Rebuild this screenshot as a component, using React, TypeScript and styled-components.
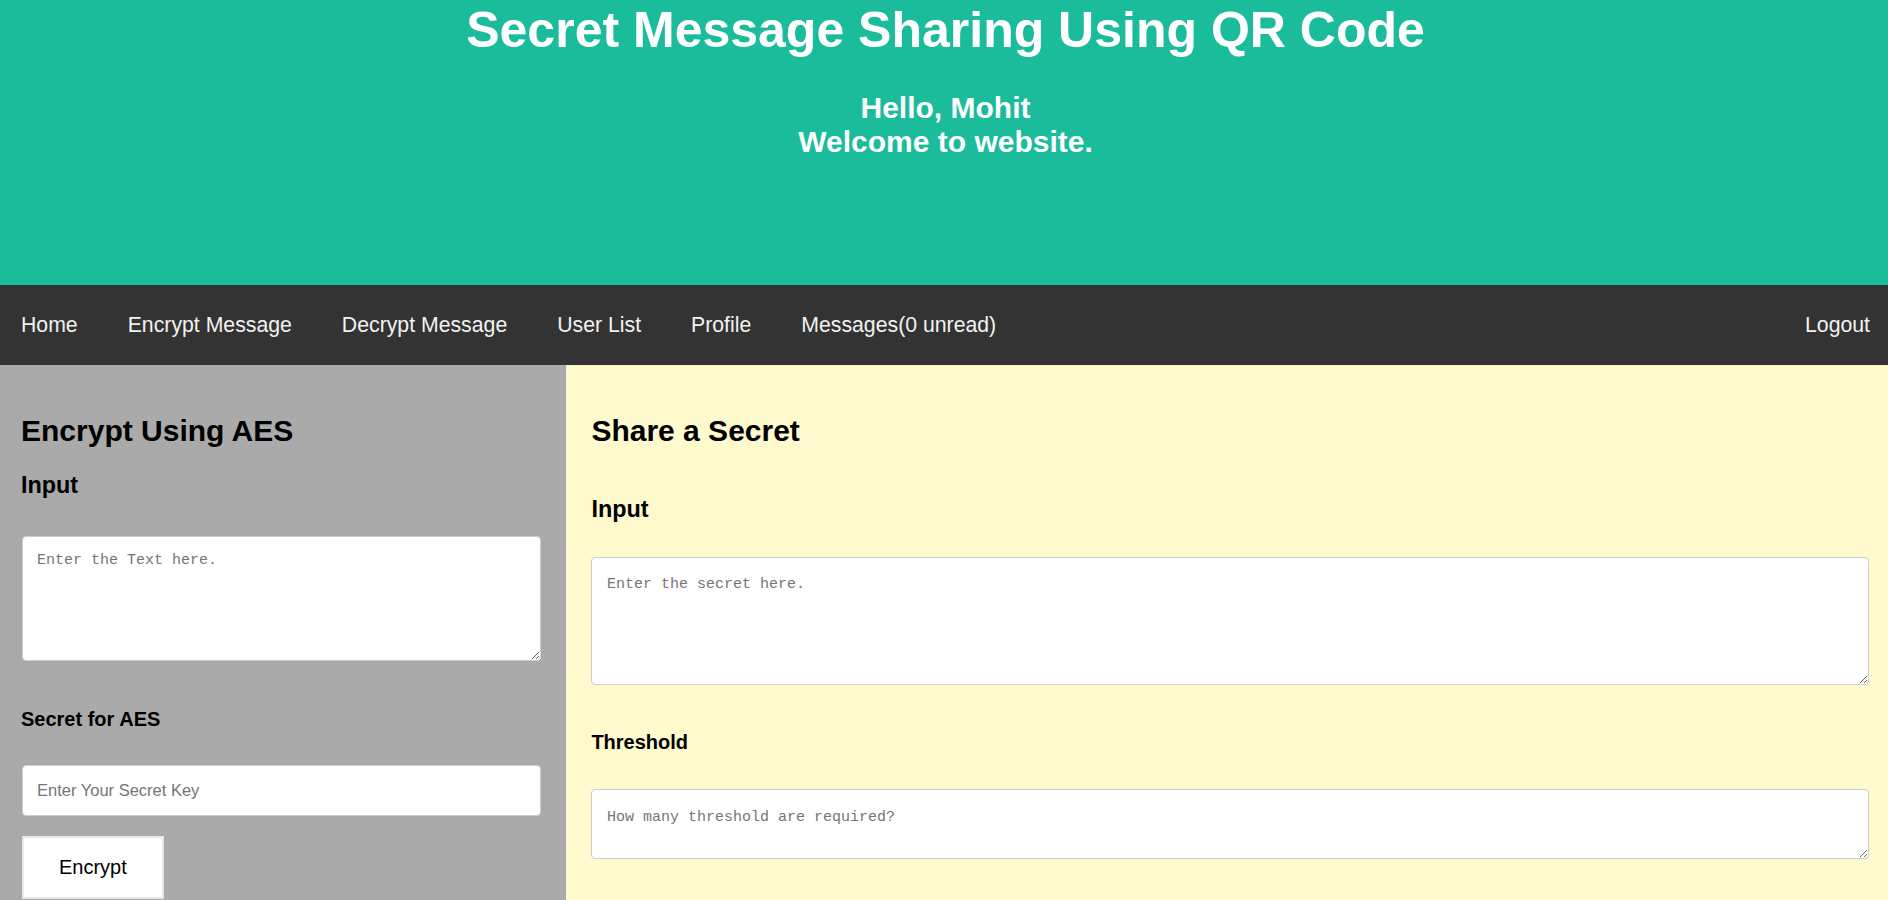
import React from 'react'
import styled, { createGlobalStyle } from 'styled-components'

const GlobalStyle = createGlobalStyle`
    html, body {
        margin: 0;
        padding: 0;
        font-family: "Liberation Sans", Arial, sans-serif;
    }
    * {
        box-sizing: border-box;
    }
`

const Header = styled.header`
    background: #1abc9c;
    color: #ffffff;
    text-align: center;
    height: 285px;
    padding-top: 1px;
`

const Title = styled.h1`
    margin: 0;
    padding-left: 3px;
    font-size: 50px;
    font-weight: bold;
    line-height: normal;
`

const Greeting = styled.h2`
    margin: 31.5px 0 0;
    padding-left: 3px;
    font-size: 30px;
    font-weight: bold;
    line-height: normal;
`

const TopNav = styled.nav`
    background: #333333;
    height: 80px;
    display: flex;
    align-items: center;
    justify-content: space-between;
    padding: 0 18px 0 21px;
`

const NavGroup = styled.div`
    display: flex;
    align-items: center;
    gap: 50px;
`

const NavLink = styled.a`
    color: #f2f2f2;
    font-size: 21.25px;
    text-decoration: none;
    cursor: pointer;
`

const Row = styled.div`
    display: flex;
    align-items: stretch;
`

const Column = styled.section<{ $bg: string; $pad: string; $basis: string }>`
    background: ${props => props.$bg};
    padding: ${props => props.$pad};
    flex: ${props => props.$basis};
    min-height: 535px;
`

const PanelTitle = styled.h2`
    margin: 49px 0 0;
    font-size: 30px;
    font-weight: bold;
    line-height: normal;
    color: #000;
`

const SectionLabel = styled.h3<{ $mt: number }>`
    margin: ${props => props.$mt}px 0 0;
    font-size: 23.4px;
    font-weight: bold;
    line-height: normal;
    color: #000;
`

const FieldLabel = styled.h4<{ $mt: number }>`
    margin: ${props => props.$mt}px 0 0;
    font-size: 20px;
    font-weight: bold;
    line-height: normal;
    color: #000;
`

const TextBox = styled.textarea<{ $mt: number; $h: number; $padTop: number; $shift: number }>`
    display: block;
    margin: ${props => props.$mt}px 0 0 ${props => props.$shift}px;
    width: calc(100% - ${props => props.$shift}px);
    height: ${props => props.$h}px;
    padding: ${props => props.$padTop}px 14.5px 10px;
    border: 1px solid #cccccc;
    border-radius: 4px;
    background: #ffffff;
    font-family: "Liberation Mono", Consolas, monospace;
    font-size: 15px;
    line-height: normal;
    color: #222;
    &::placeholder {
        color: #757575;
    }
`

const KeyInput = styled.input`
    display: block;
    margin: 34px 0 0 0.5px;
    width: calc(100% - 0.5px);
    height: 51px;
    padding: 0 14.5px;
    border: 1px solid #cccccc;
    border-radius: 4px;
    background: #ffffff;
    font-family: "Liberation Sans", Arial, sans-serif;
    font-size: 16.5px;
    &::placeholder {
        color: #757575;
    }
`

const EncryptButton = styled.button`
    display: block;
    margin: 19.5px 0 0 0.5px;
    padding: 18px 35.5px;
    background: #ffffff;
    border: 2px solid #e7e7e7;
    color: #000;
    font-family: "Liberation Sans", Arial, sans-serif;
    font-size: 20px;
    line-height: normal;
    cursor: pointer;
`

const links = ['Home', 'Encrypt Message', 'Decrypt Message', 'User List', 'Profile', 'Messages(0 unread)']

export default function App() {
    return (
        <>
            <GlobalStyle />
            <Header>
                <Title>Secret Message Sharing Using QR Code</Title>
                <Greeting>
                    Hello, Mohit
                    <br />
                    Welcome to website.
                </Greeting>
            </Header>
            <TopNav>
                <NavGroup>
                    {links.map(link => (
                        <NavLink key={link}>{link}</NavLink>
                    ))}
                </NavGroup>
                <NavLink>Logout</NavLink>
            </TopNav>
            <Row>
                <Column $bg="#aaaaaa" $pad="0 25px 0 21px" $basis="0 0 30%">
                    <PanelTitle>Encrypt Using AES</PanelTitle>
                    <SectionLabel $mt={24.3}>Input</SectionLabel>
                    <TextBox $mt={36.3} $h={125} $padTop={15} $shift={0.5} placeholder="Enter the Text here." />
                    <FieldLabel $mt={47.5}>Secret for AES</FieldLabel>
                    <KeyInput placeholder="Enter Your Secret Key" />
                    <EncryptButton>Encrypt</EncryptButton>
                </Column>
                <Column $bg="#fff9ce" $pad="0 19px 0 25px" $basis="1 1 auto">
                    <PanelTitle>Share a Secret</PanelTitle>
                    <SectionLabel $mt={48}>Input</SectionLabel>
                    <TextBox $mt={34.3} $h={128} $padTop={18} $shift={0} placeholder="Enter the secret here." />
                    <FieldLabel $mt={46}>Threshold</FieldLabel>
                    <TextBox $mt={35} $h={70} $padTop={19} $shift={0} placeholder="How many threshold are required?" />
                </Column>
            </Row>
        </>
    )
}
